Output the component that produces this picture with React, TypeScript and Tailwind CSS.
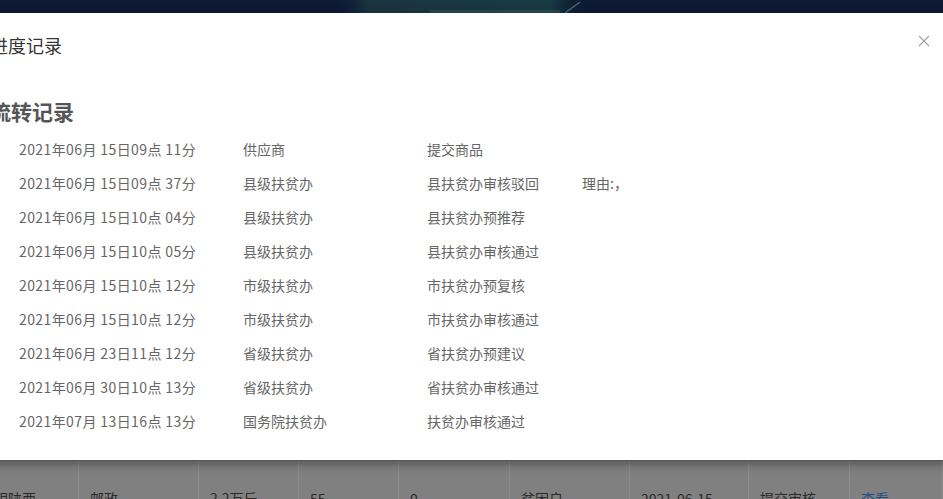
import React from "react";

const rows = [
  ["2021年06月 15日09点 11分", "供应商", "提交商品", ""],
  ["2021年06月 15日09点 37分", "县级扶贫办", "县扶贫办审核驳回", "理由:，"],
  ["2021年06月 15日10点 04分", "县级扶贫办", "县扶贫办预推荐", ""],
  ["2021年06月 15日10点 05分", "县级扶贫办", "县扶贫办审核通过", ""],
  ["2021年06月 15日10点 12分", "市级扶贫办", "市扶贫办预复核", ""],
  ["2021年06月 15日10点 12分", "市级扶贫办", "市扶贫办审核通过", ""],
  ["2021年06月 23日11点 12分", "省级扶贫办", "省扶贫办预建议", ""],
  ["2021年06月 30日10点 13分", "省级扶贫办", "省扶贫办审核通过", ""],
  ["2021年07月 13日16点 13分", "国务院扶贫办", "扶贫办审核通过", ""],
];

const cells = [
  { w: "w-[79px]", t: "阴陕西", pad: "pl-0", cls: "text-[#2a2a2a]" },
  { w: "w-[120px]", t: "邮政", pad: "pl-[11px]", cls: "text-[#2a2a2a]" },
  { w: "w-[100px]", t: "2.2万斤", pad: "pl-[11px]", cls: "text-[#2a2a2a]" },
  { w: "w-[100px]", t: "55", pad: "pl-[11px]", cls: "text-[#2a2a2a]" },
  { w: "w-[111px]", t: "0", pad: "pl-[11px]", cls: "text-[#2a2a2a]" },
  { w: "w-[120px]", t: "贫困户", pad: "pl-[11px]", cls: "text-[#2a2a2a]" },
  { w: "w-[119px]", t: "2021-06-15", pad: "pl-[11px]", cls: "text-[#2a2a2a]" },
  { w: "w-[101px]", t: "提交审核", pad: "pl-[11px]", cls: "text-[#2a2a2a]" },
  { w: "flex-1", t: "查看", pad: "pl-[11px]", cls: "text-[#1d4f8a]" },
];

export default function App() {
  return (
    <div
      className="relative w-[943px] h-[499px] overflow-hidden bg-[#808080]"
      style={{ fontFamily: '"Microsoft YaHei","Noto Sans CJK SC","Noto Sans",sans-serif' }}
    >
      {/* background page (under mask) */}
      <div className="flex flex-col h-full">
        <div className="relative h-[13px] bg-[#0c1a33] overflow-hidden">
          <svg className="absolute left-0 top-0" width="943" height="13" viewBox="0 0 943 13">
            <defs>
              <linearGradient id="g" x1="0" x2="1" y1="0" y2="0">
                <stop offset="0" stopColor="#0c1a33" stopOpacity="0" />
                <stop offset="0.15" stopColor="#1a3440" stopOpacity="1" />
                <stop offset="0.85" stopColor="#1a3a42" stopOpacity="1" />
                <stop offset="1" stopColor="#0c1a33" stopOpacity="0" />
              </linearGradient>
            </defs>
            <rect x="330" y="0" width="260" height="13" fill="url(#g)" />
            <rect x="430" y="10" width="130" height="3" fill="#2c4f52" opacity="0.7" />
            <line x1="565" y1="13" x2="580" y2="2" stroke="#4a6a70" strokeWidth="1.5" />
          </svg>
        </div>
        <div className="flex-1" />
        <div className="h-[39px] flex border-t border-[#787878] bg-[#808080]">
          {cells.map((c, i) => (
            <div
              key={i}
              className={`${c.w} ${c.pad} ${c.cls} border-r border-[#8b8b8b] text-[14px] pt-[27px] whitespace-nowrap overflow-hidden`}
            >
              {i === 0 ? <span className="ml-[-6px]">{c.t}</span> : c.t}
            </div>
          ))}
        </div>
      </div>

      {/* modal */}
      <div className="absolute left-[-24px] right-[-40px] top-[13px] h-[447px] bg-white shadow-[0_4px_10px_rgba(0,0,0,0.35)]">
        <div className="h-16 flex items-center pl-[14px] pr-[53px] relative">
          <span className="text-[18px] leading-6 text-[#333]">进度记录</span>
          <svg
            className="absolute right-[53px] top-[22px]"
            width="12"
            height="12"
            viewBox="0 0 12 12"
          >
            <path d="M1 1 L11 11 M11 1 L1 11" stroke="#a0a0a0" strokeWidth="1.1" fill="none" />
          </svg>
        </div>
        <div className="pl-[14px] pt-[20px]">
          <div className="text-[21px] leading-7 font-bold text-[#555]">流转记录</div>
          <div className="mt-[7px] pl-[29px]">
            {rows.map((r, i) => (
              <div key={i} className="h-[34px] flex items-center text-[14px] text-[#666] whitespace-nowrap">
                <div className="w-[224px] tracking-[0.4px]">{r[0]}</div>
                <div className="w-[184px]">{r[1]}</div>
                <div className="w-[155px]">{r[2]}</div>
                <div>{r[3]}</div>
              </div>
            ))}
          </div>
        </div>
      </div>
    </div>
  );
}
